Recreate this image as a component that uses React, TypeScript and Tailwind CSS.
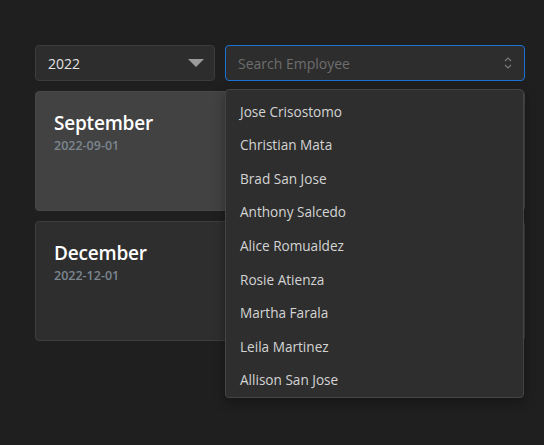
import React from 'react';

const employees = [
  'Jose Crisostomo',
  'Christian Mata',
  'Brad San Jose',
  'Anthony Salcedo',
  'Alice Romualdez',
  'Rosie Atienza',
  'Martha Farala',
  'Leila Martinez',
  'Allison San Jose',
];

const months = [
  { name: 'September', date: '2022-09-01', active: true },
  { name: 'December', date: '2022-12-01', active: false },
];

function MonthCard({ name, date, active }: { name: string; date: string; active: boolean }) {
  return (
    <div
      className={
        active
          ? 'h-[120px] rounded-[4px] border border-[#474747] bg-[#424242] px-[18px] pt-[18px]'
          : 'h-[120px] rounded-[4px] border border-[#3d3d3d] bg-[#2e2e2e] px-[18px] pt-[18px]'
      }
    >
      <div className="text-[19px] font-semibold leading-[27px] tracking-[-0.2px] text-white">{name}</div>
      <div className="mt-[1px] text-[12.5px] font-semibold leading-[15px] text-[#7b8691]">{date}</div>
    </div>
  );
}

export default function App() {
  return (
    <div
      className="min-h-[445px] w-full bg-[#1f1f1f] pl-[35px] pt-[45px]"
      style={{ fontFamily: '"Open Sans", "Noto Sans", sans-serif' }}
    >
      <div className="w-[490px]">
        <div className="flex gap-[10px]">
          <div className="flex h-[36px] w-[180px] items-center justify-between rounded-[4px] border border-[#3c3c3c] bg-[#2d2d2d] pl-[12px] pr-[10px]">
            <span className="text-[14px] text-[#e2e2e2]">2022</span>
            <svg width="16" height="8" viewBox="0 0 16 8">
              <path d="M0 0 H16 L8 8 Z" fill="#9b9b9b" />
            </svg>
          </div>
          <div className="relative flex-1">
            <div className="flex h-[36px] items-center justify-between rounded-[4px] border border-[#1a73d4] bg-[#2d2d2d] pl-[12px] pr-[12px]">
              <span className="text-[14px] text-[#6e6e6e]">Search Employee</span>
              <svg width="8" height="14" viewBox="0 0 8 14" fill="none" stroke="#7a7a7a" strokeWidth="1.2">
                <path d="M1 5 L4 2 L7 5" />
                <path d="M1 9 L4 12 L7 9" />
              </svg>
            </div>
            <div className="absolute left-[0px] right-[1px] top-[44px] z-10 rounded-[4px] border border-[#444444] bg-[#2e2e2e] pt-[5px] shadow-[0_4px_12px_rgba(0,0,0,0.35)]">
              {employees.map((e) => (
                <div key={e} className="flex h-[33.6px] items-center pl-[14px] text-[13.6px] text-[#d4d4d4]">
                  {e}
                </div>
              ))}
            </div>
          </div>
        </div>
        <div className="mt-[10px] flex flex-col gap-[10px]">
          {months.map((m) => (
            <MonthCard key={m.name} {...m} />
          ))}
        </div>
      </div>
    </div>
  );
}
